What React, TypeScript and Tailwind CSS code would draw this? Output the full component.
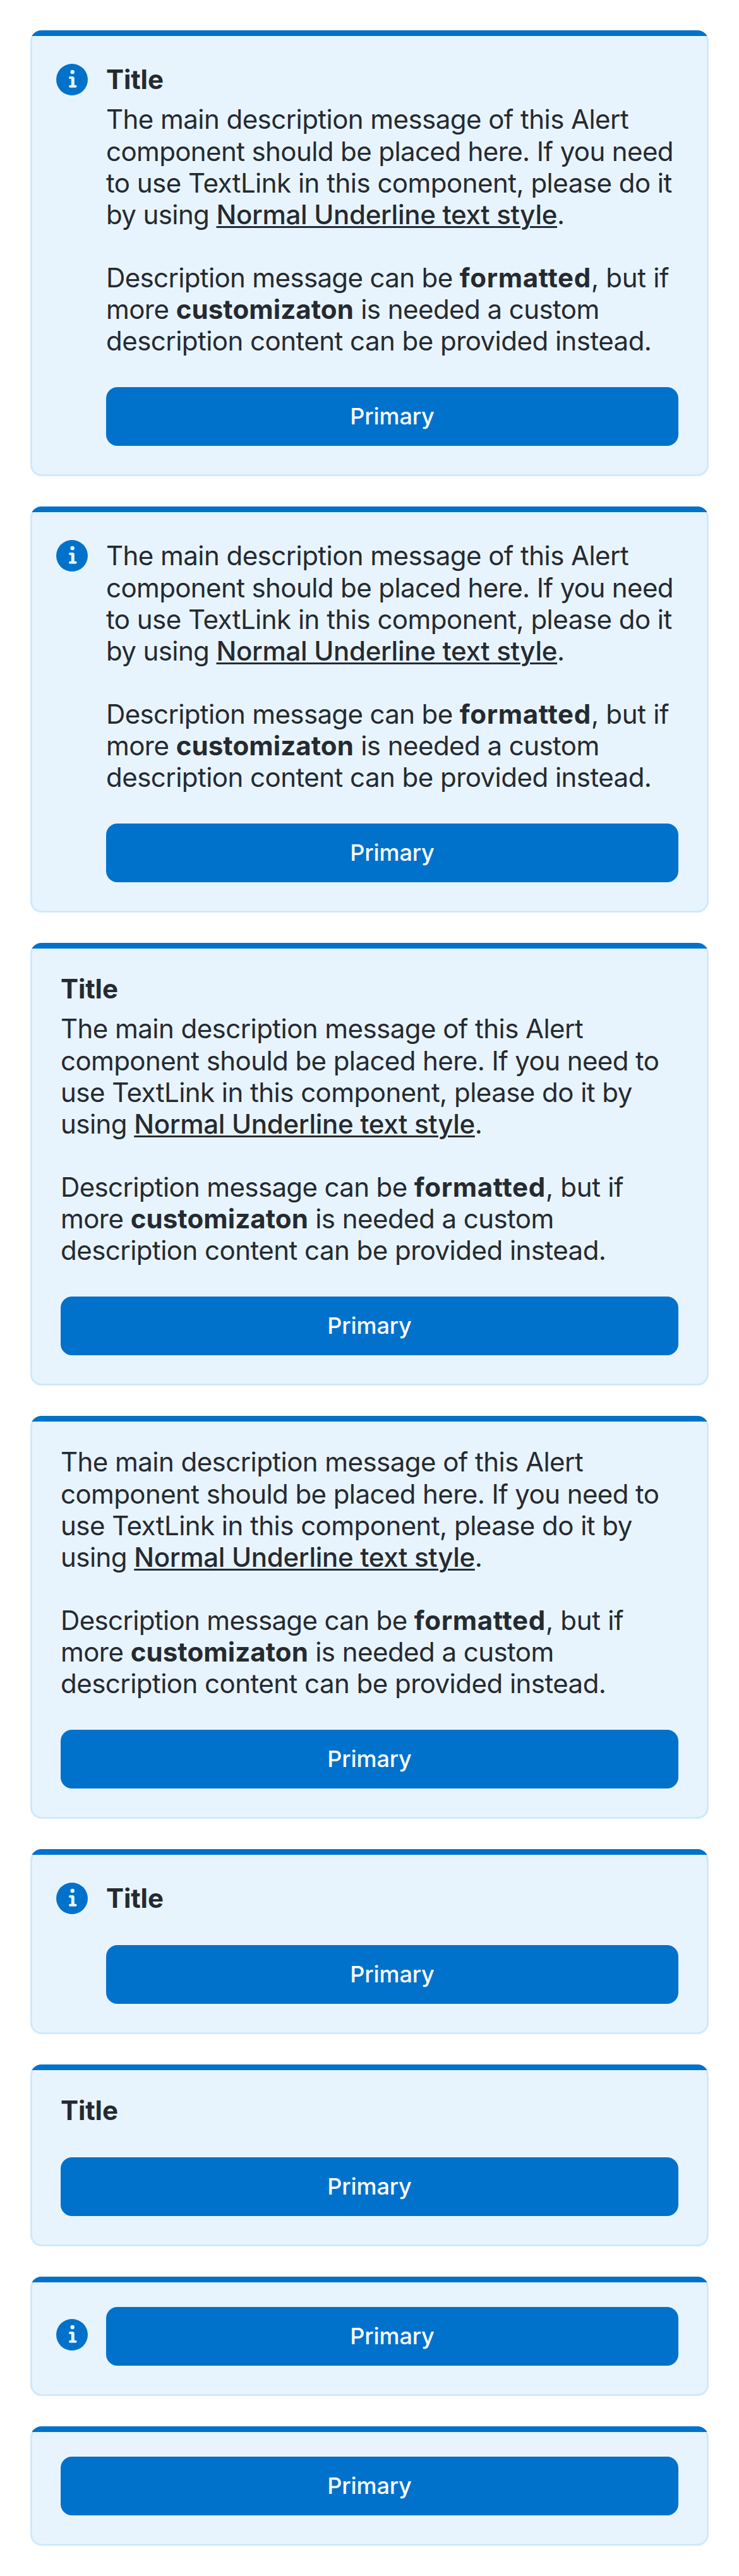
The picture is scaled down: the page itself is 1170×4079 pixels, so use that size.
import React from "react";

type AlertProps = { icon?: boolean; title?: boolean; description?: boolean };

const alerts: AlertProps[] = [
  { icon: true, title: true, description: true },
  { icon: true, description: true },
  { title: true, description: true },
  { description: true },
  { icon: true, title: true },
  { title: true },
  { icon: true },
  {},
];

function InfoIcon() {
  return (
    <svg className="block h-[50px] w-[50px]" viewBox="0 0 50 50" fill="none">
      <circle cx="25" cy="25" r="25" fill="#0172CB" />
      <circle cx="25.7" cy="13.1" r="3.25" fill="#E8F4FD" />
      <path
        d="M22 20H25.6Q28.8 20 28.8 23.2V33.7H30.6A2 2 0 0 1 30.6 37.7H22A2 2 0 0 1 22 33.7H23.8V24.1H22A2.05 2.05 0 0 1 22 20Z"
        fill="#E8F4FD"
      />
    </svg>
  );
}

function TextLink() {
  return (
    <a className="font-medium tracking-[-0.3px] underline decoration-[3px] underline-offset-[3px]">
      Normal Underline text style
    </a>
  );
}

function Description({ wide }: { wide: boolean }) {
  return (
    <div className="whitespace-nowrap tracking-[-0.55px]">
      <p className="h-[51px]">The main description message of this Alert</p>
      {wide ? (
        <>
          <p className="tracking-[-0.58px]">component should be placed here. If you need to</p>
          <p className="tracking-[-0.53px]">use TextLink in this component, please do it by</p>
          <p>
            using <TextLink />.
          </p>
        </>
      ) : (
        <>
          <p className="tracking-[-0.6px]">component should be placed here. If you need</p>
          <p className="tracking-[-0.51px]">to use TextLink in this component, please do it</p>
          <p className="tracking-[-0.6px]">
            by using <TextLink />.
          </p>
        </>
      )}
      <p className="mt-[50px] tracking-[-0.64px]">
        Description message can be <strong className="font-bold tracking-[0.7px]">formatted</strong>
        <span className="tracking-[-0.3px]">, but if</span>
      </p>
      <p>
        more <strong className="font-bold tracking-[0.1px]">customizaton</strong> is needed a custom
      </p>
      <p className="tracking-[-0.53px]">description content can be provided instead.</p>
    </div>
  );
}

function Alert({ icon = false, title = false, description = false }: AlertProps) {
  const hasText = title || description;
  return (
    <section className="overflow-hidden rounded-[18px] bg-[#E8F4FD] shadow-[inset_0_0_0_3px_#D0E9FB]">
      <div className="h-[9px] bg-[#0172CB]" />
      <div className={`flex pr-12 pb-12 ${icon ? "pl-[41px]" : "pl-12"} ${icon && hasText ? "pt-11" : "pt-[39px]"}`}>
        {icon && (
          <div className={`mr-[29px] shrink-0 ${hasText ? "" : "pt-[19px]"}`}>
            <InfoIcon />
          </div>
        )}
        <div className="min-w-0 flex-1">
          {title && <h3 className="h-[51px] font-bold tracking-[-0.1px]">Title</h3>}
          {title && description && <div className="h-3" />}
          {description && <Description wide={!icon} />}
          <button
            className={`flex h-[93px] w-full items-center justify-center rounded-[18px] bg-[#0172CB] text-[36px] leading-[45px] font-medium tracking-[-0.1px] text-white ${hasText ? "mt-12" : ""}`}
          >
            Primary
          </button>
        </div>
      </div>
    </section>
  );
}

export default function App() {
  return (
    <main className="flex min-h-[4079px] w-[1170px] flex-col gap-12 bg-white p-12 font-['Inter',sans-serif] text-[42px] leading-[50px] text-[#252A31]">
      {alerts.map((alert, i) => (
        <Alert key={i} {...alert} />
      ))}
    </main>
  );
}
